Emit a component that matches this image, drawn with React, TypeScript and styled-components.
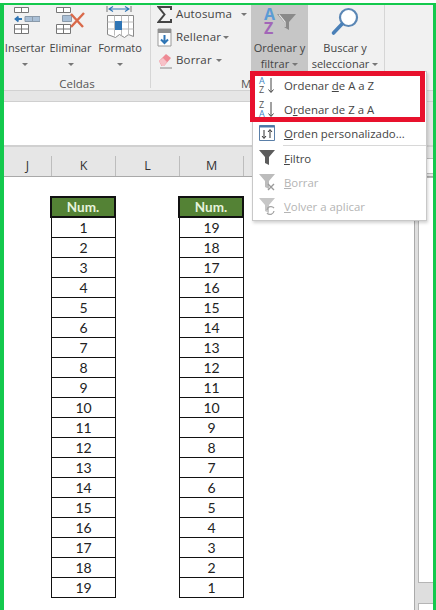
import React from "react";
import styled, { createGlobalStyle } from "styled-components";

const Global = createGlobalStyle`
  html, body { margin: 0; padding: 0; background: #fff; }
  * { box-sizing: border-box; }
`;

const Page = styled.div`
  width: 436px;
  height: 610px;
  padding-top: 3px;
  background: #fff;
  overflow: hidden;
  font-family: "Open Sans", "Liberation Sans", sans-serif;
`;

const Frame = styled.div`
  position: relative;
  width: 436px;
  height: 607px;
  border-top: 2px solid #14c94d;
  border-left: 4px solid #14c94d;
  border-right: 3px solid #14c94d;
  background: #fff;
  display: flex;
  flex-direction: column;
  overflow: hidden;
`;

const Ribbon = styled.div`
  height: 86px;
  flex: none;
  display: flex;
  background: #f1f1f1;
  border-bottom: 1px solid #d2d2d2;
  color: #444;
  font-size: 11px;
  line-height: 16px;
`;

const Group = styled.div<{ $w: number }>`
  width: ${(p) => p.$w}px;
  height: 83px;
  flex: none;
  display: flex;
  flex-direction: column;
  border-right: 1px solid #d6d6d6;
`;

const GroupBody = styled.div`
  height: 72px;
  flex: none;
  display: flex;
`;

const GroupLabel = styled.div<{ $inset?: number }>`
  text-align: ${(p) => (p.$inset ? "left" : "center")};
  padding-left: ${(p) => p.$inset ?? 0}px;
  color: #555;
  line-height: 14px;
  font-size: 11.5px;
`;

const TallButton = styled.div<{ $w: number; $active?: boolean }>`
  width: ${(p) => p.$w}px;
  height: 67px;
  flex: none;
  display: flex;
  flex-direction: column;
  align-items: center;
  background: ${(p) => (p.$active ? "#c6c6c6" : "transparent")};
  white-space: nowrap;
`;

const IconSlot = styled.div`
  height: 35px;
  flex: none;
  display: flex;
  justify-content: center;
  align-items: flex-start;
`;

const CaretLine = styled.div`
  height: 16px;
  display: flex;
  align-items: center;
`;

const Caret = styled.span<{ $gap?: number }>`
  width: 0;
  height: 0;
  flex: none;
  margin-left: ${(p) => p.$gap ?? 3}px;
  border-left: 3px solid transparent;
  border-right: 3px solid transparent;
  border-top: 3px solid #777;
`;

const SmallColumn = styled.div`
  width: 100px;
  flex: none;
  display: flex;
  flex-direction: column;
  gap: 5px;
`;

const SmallRow = styled.div`
  height: 18px;
  display: flex;
  align-items: center;
  gap: 4px;
  padding-left: 6px;
  font-size: 11.5px;
  letter-spacing: 0.15px;
`;

const SmallIcon = styled.svg`
  width: 15px;
  height: 19px;
  flex: none;
`;

const Band = styled.div`
  height: 11px;
  flex: none;
  background: #e6e6e6;
  border-bottom: 1px solid #cfcfcf;
`;

const FormulaArea = styled.div`
  height: 45px;
  flex: none;
  display: flex;
  justify-content: flex-end;
  background: #fff;
  border-bottom: 2px solid #d0d0d0;
`;

const FormulaScroll = styled.div`
  width: 7px;
  background: #e4e4e4;
`;

const HeaderRow = styled.div`
  height: 30px;
  flex: none;
  display: flex;
  align-items: flex-end;
  background: #e6e6e6;
  border-bottom: 1px solid #a9a9a9;
`;

const ColumnHeader = styled.div<{ $w: number }>`
  width: ${(p) => p.$w}px;
  height: 20px;
  flex: none;
  border-right: 1px solid #bdbdbd;
  text-align: center;
  font-size: 12.5px;
  line-height: 20px;
  color: #333;
`;

const HeaderFill = styled.div`
  flex: 1;
`;

const SmallScrollButton = styled.div`
  width: 7px;
  height: 16px;
  margin-bottom: 2px;
  background: #fff;
  border: 1px solid #bbb;
  border-right: none;
`;

const SheetRow = styled.div`
  flex: 1;
  min-height: 0;
  display: flex;
`;

const Sheet = styled.div`
  flex: 1;
  display: flex;
  align-items: flex-start;
  gap: 62px;
  padding: 19px 0 0 46px;
  background: #fff;
`;

const DataColumn = styled.div`
  width: 66px;
  flex: none;
  display: flex;
  flex-direction: column;
  font-family: Lato, "Liberation Sans", sans-serif;
`;

const HeadCell = styled.div`
  height: 22px;
  border: 2px solid #111;
  background: #548235;
  color: #e6f3dc;
  font-weight: 700;
  font-size: 13.5px;
  line-height: 18px;
  text-align: center;
`;

const Cell = styled.div`
  height: 20px;
  margin-left: 1px;
  border: 1px solid #111;
  border-top: none;
  background: #fff;
  color: #222;
  font-size: 14px;
  line-height: 20px;
  text-align: center;
`;

const Scrollbar = styled.div`
  width: 19px;
  flex: none;
  display: flex;
  flex-direction: column;
  background: #dedede;
  border-left: 1px solid #aaa;
  padding-left: 3px;
`;

const Thumb = styled.div<{ $h: number }>`
  height: ${(p) => p.$h}px;
  flex: none;
  background: #fff;
  border: 1px solid #b5b5b5;
  border-right: none;
`;

const TrackGap = styled.div`
  height: 20px;
  flex: none;
`;

const Menu = styled.div`
  position: absolute;
  left: 248px;
  top: 66px;
  width: 175px;
  height: 150px;
  padding-top: 1px;
  background: #fff;
  border: 1px solid #c8c8c8;
  box-shadow: 1px 2px 3px rgba(0, 0, 0, 0.18);
  color: #444;
  font-size: 11.4px;
`;

const MenuItem = styled.div<{ $disabled?: boolean }>`
  height: 24px;
  display: flex;
  align-items: center;
  gap: 6px;
  padding-left: 3px;
  white-space: nowrap;
  color: ${(p) => (p.$disabled ? "#b4b4b4" : "#444")};
`;

const MenuIcon = styled.svg`
  width: 22px;
  height: 22px;
  flex: none;
`;

const MenuDivider = styled.div`
  height: 1px;
  margin-left: 30px;
  background: #d8d8d8;
`;

const Highlight = styled.div`
  position: absolute;
  left: 246px;
  top: 66px;
  width: 175px;
  height: 51px;
  border: 5px solid #e8112d;
  pointer-events: none;
`;

const InsertIcon = () => (
  <svg width="30" height="30" viewBox="0 0 30 30">
    <g fill="#fff" stroke="#777" strokeWidth="1">
      <path d="M4.5 2.500h14v5h-14zM11.500 2.500v5" />
      <path d="M4.500 19.500h14v9h-14zM11.500 19.500v9M4.500 24h14" />
    </g>
    <path d="M15 11.500h15v5H15z" fill="#a9bfd6" stroke="#8a9aaa" />
    <path d="M22.500 11.500v5" stroke="#8a9aaa" />
    <path d="M12 14H6M8.500 11.500 5.500 14l3 2.500" fill="none" stroke="#2f75b5" strokeWidth="1.8" />
  </svg>
);

const DeleteIcon = () => (
  <svg width="32" height="30" viewBox="0 0 32 30">
    <g fill="#fff" stroke="#777" strokeWidth="1">
      <path d="M1.500 2.500h14v5h-14zM8.500 2.500v5" />
      <path d="M1.500 19.500h14v9h-14zM8.500 19.500v9M1.500 24h14" />
    </g>
    <path d="M7.500 10.500h9v6h-9z" fill="#a9bfd6" stroke="#8a9aaa" />
    <path d="M16 9l12 13M29 8 16 22" stroke="#d9694a" strokeWidth="2.400" fill="none" />
  </svg>
);

const FormatIcon = () => (
  <svg width="30" height="34" viewBox="0 0 30 34">
    <path d="M2 1v6M26 1v6" stroke="#777" />
    <path d="M4 4h20M8 1.500 4 4l4 2.500M20 1.500 24 4l-4 2.500" stroke="#2f75b5" fill="none" strokeWidth="1.100" />
    <path d="M2.500 10.500h26v21l-5-2-4 3-5-3-4 3-8-3z" fill="#fff" stroke="#888" />
    <path d="M9.500 10.500v20M16.500 10.500v20M23.500 10.500v20M2.500 17h26M2.500 24h26" stroke="#bbb" fill="none" />
    <path d="M10 16h7v9h-7z" fill="#2f75b5" />
  </svg>
);

const MagnifierIcon = () => (
  <svg width="30" height="34" viewBox="0 0 30 34">
    <circle cx="18.500" cy="12.500" r="8.500" fill="#fff" stroke="#5b87b5" strokeWidth="2.200" />
    <path d="M12 19 3.500 28" stroke="#4a80b8" strokeWidth="3.600" strokeLinecap="round" />
  </svg>
);

const SortFilterIcon = () => (
  <svg width="34" height="32" viewBox="0 0 34 32">
    <text x="1" y="15" fontFamily="Open Sans, sans-serif" fontSize="16" fontWeight="700" fill="#5b9bd5">A</text>
    <text x="1" y="29" fontFamily="Open Sans, sans-serif" fontSize="16" fontWeight="700" fill="#a266b8">Z</text>
    <path d="M14 9h19l-7 8v8l-5-3v-5z" fill="#8a8a8a" />
    <path d="M16 9.500l6 7.500v5" stroke="#e8e8e8" fill="none" strokeWidth="1.200" />
  </svg>
);

const SortGlyph = ({ top, bottom }: { top: string; bottom: string }) => (
  <MenuIcon viewBox="0 0 22 22">
    <text x="3" y="10" fontFamily="Open Sans, sans-serif" fontSize="9" fill={top === "A" ? "#3d85c6" : "#555"}>{top}</text>
    <text x="3" y="19" fontFamily="Open Sans, sans-serif" fontSize="9" fill={bottom === "A" ? "#3d85c6" : "#555"}>{bottom}</text>
    <path d="M15 4v14M12.500 15.500 15 18.500l2.500-3" stroke="#444" fill="none" />
  </MenuIcon>
);

const CustomSortGlyph = () => (
  <MenuIcon viewBox="0 0 22 22">
    <path d="M3.500 3.500h15v15h-15z" fill="#fff" stroke="#5a7fa8" />
    <path d="M3.500 3.500h15v2h-15z" fill="#4a78a8" />
    <path d="M8 8v8M6 14l2 2.500 2-2.500M14 16V8M12 10l2-2.500 2 2.500" stroke="#333" fill="none" />
  </MenuIcon>
);

const FunnelGlyph = ({ color }: { color: string }) => (
  <path d="M3 3h16l-6 7v8l-4-2v-6z" fill={color} />
);

const FilterGlyph = () => (
  <MenuIcon viewBox="0 0 22 22"><FunnelGlyph color="#5c5c5c" /></MenuIcon>
);

const ClearGlyph = () => (
  <MenuIcon viewBox="0 0 22 22">
    <FunnelGlyph color="#bcbcbc" />
    <path d="M12 13l6 6M18 13l-6 6" stroke="#9a9a9a" strokeWidth="1.400" />
  </MenuIcon>
);

const ReapplyGlyph = () => (
  <MenuIcon viewBox="0 0 22 22">
    <FunnelGlyph color="#c6c6c6" />
    <path d="M11 15a4 4 0 0 1 7-2M18 16a4 4 0 0 1-7 2" stroke="#a4a4a4" fill="none" strokeWidth="1.300" />
  </MenuIcon>
);

const asc = Array.from({ length: 19 }, (_, i) => i + 1);
const desc = [...asc].reverse();

export default function App() {
  return (
    <Page>
      <Global />
      <Frame>
        <Ribbon>
          <Group $w={147}>
            <GroupBody>
              <TallButton $w={42}>
                <IconSlot><InsertIcon /></IconSlot>
                <CaretLine>Insertar</CaretLine>
                <CaretLine><Caret $gap={0} /></CaretLine>
              </TallButton>
              <TallButton $w={49}>
                <IconSlot><DeleteIcon /></IconSlot>
                <CaretLine>Eliminar</CaretLine>
                <CaretLine><Caret $gap={0} /></CaretLine>
              </TallButton>
              <TallButton $w={50}>
                <IconSlot><FormatIcon /></IconSlot>
                <CaretLine>Formato</CaretLine>
                <CaretLine><Caret $gap={0} /></CaretLine>
              </TallButton>
            </GroupBody>
            <GroupLabel>Celdas</GroupLabel>
          </Group>
          <Group $w={234}>
            <GroupBody>
              <SmallColumn>
                <SmallRow>
                  <SmallIcon viewBox="0 0 15 19">
                    <path d="M14 5V2H1.500l6 7.500-6 7.500H14v-3" fill="none" stroke="#444" strokeWidth="2" />
                  </SmallIcon>
                  Autosuma<Caret $gap={5} />
                </SmallRow>
                <SmallRow>
                  <SmallIcon viewBox="0 0 15 19">
                    <path d="M1 1h13v17H1z" fill="#fff" stroke="#999" />
                    <path d="M1 1h13v4H1z" fill="#8f8f8f" />
                    <path d="M7.500 7v8M4 11.500l3.500 3.500 3.500-3.500" fill="none" stroke="#2f75b5" strokeWidth="2" />
                  </SmallIcon>
                  Rellenar<Caret $gap={-2} />
                </SmallRow>
                <SmallRow>
                  <SmallIcon viewBox="0 0 15 19">
                    <path d="M2 10l7-7 5 4-7 8H4.500z" fill="#ee8a94" />
                    <path d="M2 10l3 5h2l3-4-4-4z" fill="#f7c2c8" />
                    <path d="M3 17h12" stroke="#888" />
                  </SmallIcon>
                  Borrar<Caret $gap={0} />
                </SmallRow>
              </SmallColumn>
              <TallButton $w={57} $active>
                <IconSlot><SortFilterIcon /></IconSlot>
                <CaretLine>Ordenar y</CaretLine>
                <CaretLine>filtrar<Caret /></CaretLine>
              </TallButton>
              <TallButton $w={74}>
                <IconSlot><MagnifierIcon /></IconSlot>
                <CaretLine>Buscar y</CaretLine>
                <CaretLine>seleccionar<Caret /></CaretLine>
              </TallButton>
            </GroupBody>
            <GroupLabel $inset={90}>M</GroupLabel>
          </Group>
        </Ribbon>
        <Band />
        <FormulaArea><FormulaScroll /></FormulaArea>
        <HeaderRow>
          <ColumnHeader $w={48}>J</ColumnHeader>
          <ColumnHeader $w={64}>K</ColumnHeader>
          <ColumnHeader $w={64}>L</ColumnHeader>
          <ColumnHeader $w={64}>M</ColumnHeader>
          <HeaderFill />
          <SmallScrollButton />
        </HeaderRow>
        <SheetRow>
          <Sheet>
            <DataColumn>
              <HeadCell>Num.</HeadCell>
              {asc.map((n) => <Cell key={n}>{n}</Cell>)}
            </DataColumn>
            <DataColumn>
              <HeadCell>Num.</HeadCell>
              {desc.map((n) => <Cell key={n}>{n}</Cell>)}
            </DataColumn>
          </Sheet>
          <Scrollbar>
            <Thumb $h={406} />
            <TrackGap />
            <Thumb $h={10} />
          </Scrollbar>
        </SheetRow>
        <Menu>
          <MenuItem><SortGlyph top="A" bottom="Z" /><span>Ordenar <u>d</u>e A a Z</span></MenuItem>
          <MenuItem><SortGlyph top="Z" bottom="A" /><span>O<u>r</u>denar de Z a A</span></MenuItem>
          <MenuItem><CustomSortGlyph /><span><u>O</u>rden personalizado...</span></MenuItem>
          <MenuDivider />
          <MenuItem><FilterGlyph /><span><u>F</u>iltro</span></MenuItem>
          <MenuItem $disabled><ClearGlyph /><span><u>B</u>orrar</span></MenuItem>
          <MenuItem $disabled><ReapplyGlyph /><span><u>V</u>olver a aplicar</span></MenuItem>
        </Menu>
        <Highlight />
      </Frame>
    </Page>
  );
}
